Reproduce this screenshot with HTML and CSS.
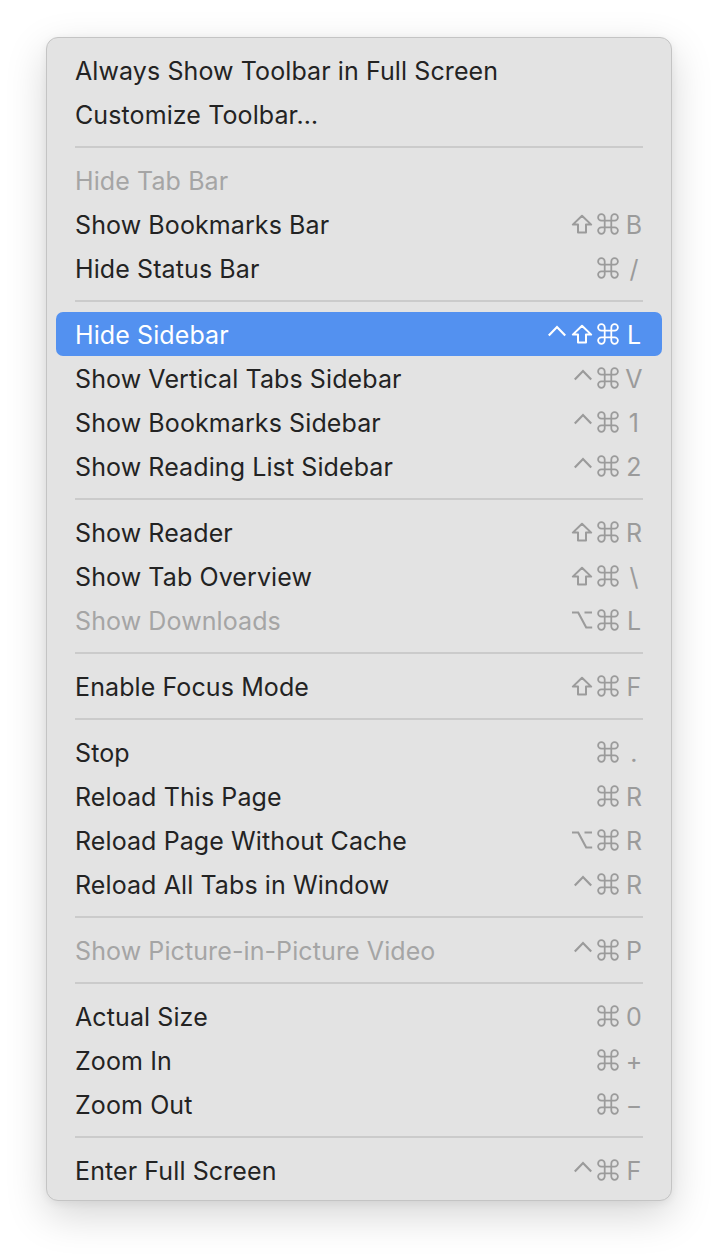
FILE: index.html
```html
<!DOCTYPE html>
<html>
<head>
<meta charset="utf-8">
<link rel="stylesheet" href="styles.css">
</head>
<body>
<svg width="0" height="0" style="position:absolute">
  <defs>
    <symbol id="cmd" viewBox="2 2 20 20"><path d="M15 6v12a3 3 0 1 0 3-3H6a3 3 0 1 0 3 3V6a3 3 0 1 0-3 3h12a3 3 0 1 0-3-3z"/></symbol>
    <symbol id="shift" viewBox="0 0 22 20"><polygon points="11,1.8 20.2,10.6 15,10.6 15,18.6 7,18.6 7,10.6 1.8,10.6"/></symbol>
    <symbol id="opt" viewBox="0 0 22 20"><path d="M1 2.5h6.2l8 15h6 M13.5 2.5h7.5"/></symbol>
    <symbol id="ctrl" viewBox="0 0 20 20"><polyline points="1.8,11.5 10,3 18.2,11.5"/></symbol>
  </defs>
</svg>
<div class="menu">
  <div class="item"><span class="label">Always Show Toolbar in Full Screen</span></div>
  <div class="item"><span class="label">Customize Toolbar…</span></div>
  <div class="sep"></div>
  <div class="item disabled"><span class="label">Hide Tab Bar</span></div>
  <div class="item"><span class="label">Show Bookmarks Bar</span><span class="keys"><svg class="m shift"><use href="#shift"/></svg><svg class="m cmd"><use href="#cmd"/></svg><span class="key">B</span></span></div>
  <div class="item"><span class="label">Hide Status Bar</span><span class="keys"><svg class="m cmd"><use href="#cmd"/></svg><span class="key">/</span></span></div>
  <div class="sep"></div>
  <div class="item active"><span class="label">Hide Sidebar</span><span class="keys"><svg class="m ctrl"><use href="#ctrl"/></svg><svg class="m shift"><use href="#shift"/></svg><svg class="m cmd"><use href="#cmd"/></svg><span class="key">L</span></span></div>
  <div class="item"><span class="label">Show Vertical Tabs Sidebar</span><span class="keys"><svg class="m ctrl"><use href="#ctrl"/></svg><svg class="m cmd"><use href="#cmd"/></svg><span class="key">V</span></span></div>
  <div class="item"><span class="label">Show Bookmarks Sidebar</span><span class="keys"><svg class="m ctrl"><use href="#ctrl"/></svg><svg class="m cmd"><use href="#cmd"/></svg><span class="key">1</span></span></div>
  <div class="item"><span class="label">Show Reading List Sidebar</span><span class="keys"><svg class="m ctrl"><use href="#ctrl"/></svg><svg class="m cmd"><use href="#cmd"/></svg><span class="key">2</span></span></div>
  <div class="sep"></div>
  <div class="item"><span class="label">Show Reader</span><span class="keys"><svg class="m shift"><use href="#shift"/></svg><svg class="m cmd"><use href="#cmd"/></svg><span class="key">R</span></span></div>
  <div class="item"><span class="label">Show Tab Overview</span><span class="keys"><svg class="m shift"><use href="#shift"/></svg><svg class="m cmd"><use href="#cmd"/></svg><span class="key">\</span></span></div>
  <div class="item disabled"><span class="label">Show Downloads</span><span class="keys"><svg class="m opt"><use href="#opt"/></svg><svg class="m cmd"><use href="#cmd"/></svg><span class="key">L</span></span></div>
  <div class="sep"></div>
  <div class="item"><span class="label">Enable Focus Mode</span><span class="keys"><svg class="m shift"><use href="#shift"/></svg><svg class="m cmd"><use href="#cmd"/></svg><span class="key">F</span></span></div>
  <div class="sep"></div>
  <div class="item"><span class="label">Stop</span><span class="keys"><svg class="m cmd"><use href="#cmd"/></svg><span class="key">.</span></span></div>
  <div class="item"><span class="label">Reload This Page</span><span class="keys"><svg class="m cmd"><use href="#cmd"/></svg><span class="key">R</span></span></div>
  <div class="item"><span class="label">Reload Page Without Cache</span><span class="keys"><svg class="m opt"><use href="#opt"/></svg><svg class="m cmd"><use href="#cmd"/></svg><span class="key">R</span></span></div>
  <div class="item"><span class="label">Reload All Tabs in Window</span><span class="keys"><svg class="m ctrl"><use href="#ctrl"/></svg><svg class="m cmd"><use href="#cmd"/></svg><span class="key">R</span></span></div>
  <div class="sep"></div>
  <div class="item disabled"><span class="label">Show Picture-in-Picture Video</span><span class="keys"><svg class="m ctrl"><use href="#ctrl"/></svg><svg class="m cmd"><use href="#cmd"/></svg><span class="key">P</span></span></div>
  <div class="sep"></div>
  <div class="item"><span class="label">Actual Size</span><span class="keys"><svg class="m cmd"><use href="#cmd"/></svg><span class="key">0</span></span></div>
  <div class="item"><span class="label">Zoom In</span><span class="keys"><svg class="m cmd"><use href="#cmd"/></svg><span class="key">+</span></span></div>
  <div class="item"><span class="label">Zoom Out</span><span class="keys"><svg class="m cmd"><use href="#cmd"/></svg><span class="key">−</span></span></div>
  <div class="sep"></div>
  <div class="item"><span class="label">Enter Full Screen</span><span class="keys"><svg class="m ctrl"><use href="#ctrl"/></svg><svg class="m cmd"><use href="#cmd"/></svg><span class="key">F</span></span></div>
</div>
</body>
</html>
```
FILE: styles.css
```css
html, body {
  margin: 0;
  padding: 0;
  background: #ffffff;
}
body {
  font-family: Inter, "Liberation Sans", sans-serif;
  -webkit-font-smoothing: antialiased;
  padding-bottom: 60px;
}
.menu {
  box-sizing: border-box;
  margin: 37px 0 0 46px;
  width: 626px;
  padding: 10px 9px 8px;
  background: #e3e3e3;
  border: 1px solid #c4c4c4;
  border-radius: 12px;
  box-shadow: 0 14px 40px rgba(0,0,0,0.17), 0 2px 8px rgba(0,0,0,0.06);
}
.item {
  height: 44px;
  padding: 0 19px;
  display: flex;
  align-items: center;
  justify-content: space-between;
  border-radius: 7px;
  color: #232323;
  font-size: 25px;
  letter-spacing: 0.1px;
}
.label {
  white-space: nowrap;
  position: relative;
  top: 1px;
}
.item.disabled { color: #a5a5a5; }
.item.active {
  background: #5391f0;
  color: #ffffff;
}
.keys {
  display: flex;
  align-items: center;
  gap: 4px;
  color: #9b9b9b;
}
.item.active .keys { color: #ffffff; }
.m {
  fill: none;
  stroke: currentColor;
  stroke-width: 2;
  stroke-linejoin: round;
  stroke-linecap: round;
}
.m.cmd { width: 22px; height: 22px; stroke-width: 1.6; }
.m.shift { width: 22px; height: 20px; stroke-width: 2; }
.m.opt { width: 22px; height: 20px; stroke-width: 2.1; stroke-linecap: butt; stroke-linejoin: miter; }
.m.ctrl { width: 20px; height: 20px; stroke-width: 2.2; stroke-linecap: butt; stroke-linejoin: miter; }
.key {
  width: 18px;
  margin-left: 2px;
  text-align: center;
  position: relative;
  top: 1px;
}
.sep {
  height: 2px;
  margin: 10px 19px;
  background: #cbcbcb;
}
```
